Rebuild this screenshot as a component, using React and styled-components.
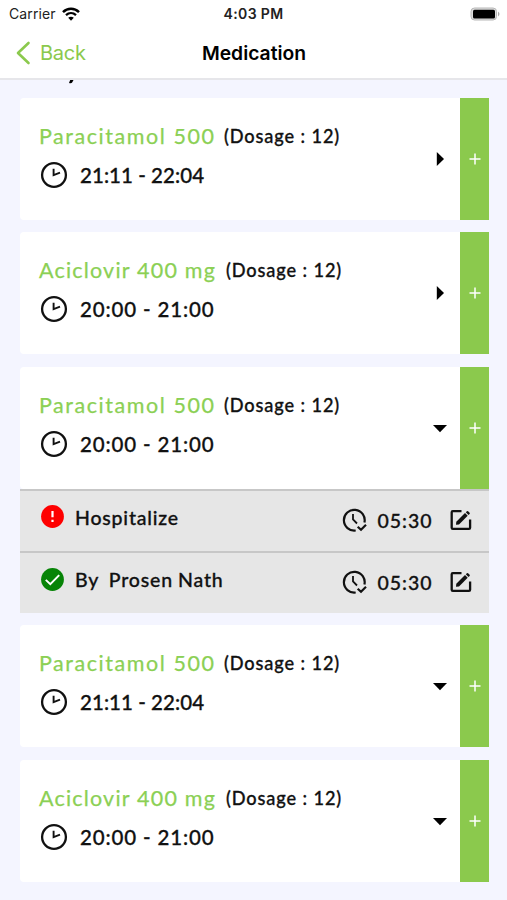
import React from "react";
import styled, { createGlobalStyle } from "styled-components";

const Global = createGlobalStyle`
  *, *::before, *::after { box-sizing: border-box; }
  body { margin: 0; background: #f4f5ff; }
`;

const Screen = styled.div`
  width: 507px;
  height: 900px;
  overflow: hidden;
  background: #f4f5ff;
  color: #111;
  font-family: Lato, "Open Sans", sans-serif;
`;

const Header = styled.header`
  height: 80px;
  background: #fff;
  border-bottom: 2px solid #e6e6ea;
  font-family: Inter, "Liberation Sans", sans-serif;
`;

const StatusBar = styled.div`
  display: grid;
  grid-template-columns: 1fr auto 1fr;
  align-items: center;
  height: 27px;
  padding: 0 7px 0 9px;
  font-size: 14px;
  color: #222;
`;

const Carrier = styled.div`
  display: flex;
  align-items: center;
  gap: 6px;
  letter-spacing: 0.1px;
`;

const Clock = styled.div`
  margin-left: -2px;
  font-weight: 600;
  font-size: 14px;
  letter-spacing: 0.35px;
`;

const Battery = styled.svg`
  justify-self: end;
`;

const NavBar = styled.div`
  display: grid;
  grid-template-columns: 1fr auto 1fr;
  align-items: center;
  height: 51px;
  padding: 0 15px;
`;

const Back = styled.div`
  display: flex;
  align-items: center;
  gap: 8px;
  color: #8bc94d;
  font-size: 20px;
  letter-spacing: -0.25px;
`;

const Title = styled.h1`
  margin: 0 0 0 1px;
  color: #000;
  font-size: 19.3px;
  font-weight: 600;
  line-height: 24px;
`;

const ScrolledHeading = styled.div`
  display: flex;
  height: 17.8px;
  padding-left: 68px;
`;

const List = styled.main`
  display: flex;
  flex-direction: column;
  gap: 12.2px;
  padding: 0 18px 0 20px;
`;

const Card = styled.div`
  display: flex;
  height: 122.2px;
  background: #fff;
  border-radius: 4px 0 0 4px;
`;

const Info = styled.div`
  flex: 1;
  padding: 23px 0 0 19px;
  white-space: nowrap;
`;

const NameLine = styled.div`
  display: flex;
  align-items: baseline;
  height: 30px;
  line-height: 30px;
`;

const Name = styled.span`
  width: ${(p) => p.$width}px;
  color: #8bd054;
  font-size: 21.5px;
  letter-spacing: ${(p) => p.$spacing}px;
  -webkit-text-stroke: 0.25px currentColor;
`;

const Dosage = styled.span`
  align-self: flex-start;
  font-size: 18.2px;
  font-weight: 500;
  letter-spacing: 0.88px;
  -webkit-text-stroke: 0.3px currentColor;
`;

const TimeLine = styled.div`
  display: flex;
  align-items: center;
  gap: 12px;
  height: 28px;
  margin-top: 10px;
  padding-left: 1px;
  font-size: 20.5px;
  font-weight: 500;
  letter-spacing: ${(p) => p.$spacing}px;
  -webkit-text-stroke: 0.3px currentColor;
`;

const Toggle = styled.div`
  display: flex;
  align-items: center;
  justify-content: center;
  width: 41px;
`;

const Add = styled.div`
  display: flex;
  align-items: center;
  justify-content: center;
  width: 28.6px;
  background: #8bc94d;
`;

const Entry = styled.div`
  display: flex;
  align-items: flex-start;
  height: 62.2px;
  padding: 14px 17.5px 0 21px;
  background: #e6e6e6;
  border-top: 2px solid #c7c7c7;
  font-weight: 500;
  white-space: nowrap;
`;

const EntryLabel = styled.div`
  flex: 1;
  margin: -1px 0 0 11px;
  font-size: 19.5px;
  line-height: 27px;
  letter-spacing: ${(p) => p.$spacing}px;
  word-spacing: -0.8px;
  white-space: pre;
  -webkit-text-stroke: 0.3px currentColor;
`;

const EntryTime = styled.div`
  width: 72px;
  margin: 3px 0 0 11px;
  font-size: 19.5px;
  line-height: 25px;
  letter-spacing: 1px;
  -webkit-text-stroke: 0.3px currentColor;
`;

const EntryIcon = styled.svg`
  margin-top: ${(p) => p.$top}px;
  flex: none;
`;

const WifiIcon = () => (
  <svg width="18" height="14" viewBox="0 0 18 14" fill="none" stroke="#000">
    <path d="M1 5.1C5.5.7 12.5.7 17 5.1" strokeWidth="2.5" />
    <path d="M4 8.2C6.9 5.5 11.1 5.5 14 8.2" strokeWidth="2.3" />
    <path d="M9 13.7 6.2 10.8C7.8 9.5 10.2 9.5 11.8 10.8Z" fill="#000" stroke="none" />
  </svg>
);

const BatteryIcon = () => (
  <Battery width="30" height="14" viewBox="0 0 30 14">
    <rect x="1" y="1" width="25.500" height="12" rx="3.5" fill="#ddd" stroke="#b7b7b7" />
    <rect x="3" y="2.8" width="22" height="8.800" rx="1.5" />
    <path d="M28 4.5Q31 7 28 9.5Z" fill="#aaa" />
  </Battery>
);

const BackIcon = () => (
  <svg width="17" height="24" viewBox="0 0 17 24" fill="none" stroke="#8bc94d" strokeWidth="2.6" strokeLinecap="round" strokeLinejoin="round">
    <path d="M13.5 2 3 12l10.500 10" />
  </svg>
);

const ClockIcon = () => (
  <svg width="28" height="28" viewBox="0 0 28 28" fill="none" stroke="#111" strokeWidth="2.300">
    <circle cx="14" cy="14" r="11.9" />
    <path d="M13.6 7.800V14.200L20 11.700" strokeWidth="1.9" />
  </svg>
);

const Arrow = ({ open }) => (
  <svg width="14" height="14" viewBox="0 0 14 14">
    <path d={open ? "M0 4h14L7 11.200z" : "M3.800 0v14L11 7z"} />
  </svg>
);

const PlusIcon = () => (
  <svg width="12" height="12" viewBox="0 0 12 12" stroke="#fff" strokeWidth="1.5">
    <path d="M6 .5v11M.5 6h11" />
  </svg>
);

const StatusIcon = ({ done }) => (
  <EntryIcon width="23" height="23" viewBox="0 0 23 23" $top={0.6}>
    <circle cx="11.500" cy="11.500" r="11.400" fill={done ? "#078407" : "#fe0000"} />
    {done ? (
      <path d="M4.800 11.900 9.300 16.200 18.200 7.100" fill="none" stroke="#fff" strokeWidth="2" />
    ) : (
      <path d="M11.500 6v6.200M11.500 14.800v2.200" stroke="#fff" strokeWidth="2.200" />
    )}
  </EntryIcon>
);

const ClockCheckIcon = () => (
  <EntryIcon width="25" height="24" viewBox="0 0 25 24" fill="none" stroke="#111" strokeWidth="2.200" $top={3.5}>
    <path d="M13.700 22.500A10.400 10.400 0 1 1 22.400 14.600" />
    <path d="M11 6v5.500l4 4" strokeWidth="1.800" />
    <path d="M15.700 18.700 19 21.700 24 16.700" />
  </EntryIcon>
);

const EditIcon = () => (
  <EntryIcon width="22" height="22" viewBox="0 0 22 22" fill="none" stroke="#111" strokeWidth="2.300" $top={4.5}>
    <path d="M11.500 2.200H2.800Q1.700 2.200 1.700 3.300V18.800Q1.700 19.900 2.800 19.900H19Q20.100 19.900 20.100 18.800V10.500" />
    <path d="M6 15.800 6.300 12.800 15 4.100 17.700 6.800 9 15.500Z" fill="#111" stroke="none" />
    <path d="m15.800 3.300 1.100-1.100q.6-.6 1.200 0l1.500 1.500q.6.600 0 1.200L18.500 6z" fill="#111" stroke="none" />
  </EntryIcon>
);

const PARA = { name: "Paracitamol 500", width: 185, spacing: 1.55 };
const ACI = { name: "Aciclovir 400 mg", width: 187, spacing: 1.2 };
const EARLY = { time: "20:00 - 21:00", timeSpacing: 0.85 };
const LATE = { time: "21:11 - 22:04", timeSpacing: 0.05 };

const medications = [
  { ...PARA, ...LATE },
  { ...ACI, ...EARLY },
  {
    ...PARA,
    ...EARLY,
    open: true,
    entries: [
      { label: "Hospitalize", spacing: 0.8, done: false },
      { label: "By  Prosen Nath", spacing: 0.85, done: true },
    ],
  },
  { ...PARA, ...LATE, open: true },
  { ...ACI, ...EARLY, open: true },
];

function Medication({ item }) {
  return (
    <section>
      <Card>
        <Info>
          <NameLine>
            <Name $width={item.width} $spacing={item.spacing}>{item.name}</Name>
            <Dosage>(Dosage : 12)</Dosage>
          </NameLine>
          <TimeLine $spacing={item.timeSpacing}>
            <ClockIcon />
            {item.time}
          </TimeLine>
        </Info>
        <Toggle><Arrow open={item.open} /></Toggle>
        <Add><PlusIcon /></Add>
      </Card>
      {item.entries?.map((entry) => (
        <Entry key={entry.label}>
          <StatusIcon done={entry.done} />
          <EntryLabel $spacing={entry.spacing}>{entry.label}</EntryLabel>
          <ClockCheckIcon />
          <EntryTime>05:30</EntryTime>
          <EditIcon />
        </Entry>
      ))}
    </section>
  );
}

export default function App() {
  return (
    <Screen>
      <Global />
      <Header>
        <StatusBar>
          <Carrier>Carrier <WifiIcon /></Carrier>
          <Clock>4:03 PM</Clock>
          <BatteryIcon />
        </StatusBar>
        <NavBar>
          <Back><BackIcon />Back</Back>
          <Title>Medication</Title>
        </NavBar>
      </Header>
      <ScrolledHeading>
        <svg width="6" height="4" viewBox="0 0 6 4"><path d="M2.200 0H5.500L4.300 2.300Q3.500 3.700 1 3z" /></svg>
      </ScrolledHeading>
      <List>
        {medications.map((item, i) => <Medication key={i} item={item} />)}
      </List>
    </Screen>
  );
}
